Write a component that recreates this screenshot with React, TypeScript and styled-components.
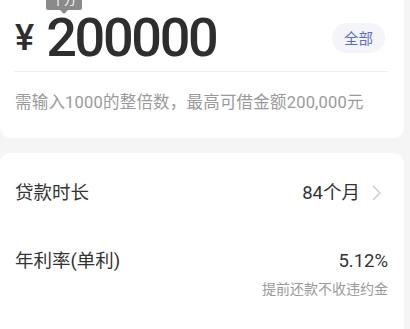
import { createGlobalStyle, styled } from 'styled-components';

const GlobalStyle = createGlobalStyle`
  html, body {
    margin: 0;
    padding: 0;
    background: #f5f5f5;
  }
  body {
    font-family: Roboto, 'Noto Sans CJK SC', sans-serif;
    color: #333;
    overflow: hidden;
  }
`;

const Page = styled.div`
  display: flex;
  flex-direction: column;
  gap: 15px;
  width: 404px;
  height: 329px;
`;

const Card = styled.section<{ $open?: boolean }>`
  background: #fff;
  border-radius: ${(p) => (p.$open ? '10px 10px 0 0' : '0 0 10px 10px')};
  padding: 0 16px 0 14px;
  flex: ${(p) => (p.$open ? '1' : 'none')};
`;

const AmountRow = styled.div`
  position: relative;
  display: flex;
  align-items: center;
  height: 67px;
  padding-top: 4px;
  border-bottom: 1px solid #eeeeee;
`;

const Tip = styled.div`
  position: absolute;
  left: 32px;
  top: -7px;
  width: 36px;
  height: 17px;
  background: #8a8a8a;
  border-radius: 2px;
  color: #fff;
  font-size: 12px;
  line-height: 17px;
  text-align: center;

  &::after {
    content: '';
    position: absolute;
    left: 14px;
    bottom: -4px;
    border-left: 4px solid transparent;
    border-right: 4px solid transparent;
    border-top: 4px solid #8a8a8a;
  }
`;

const Yen = styled.span`
  font-size: 36px;
  line-height: 36px;
  font-weight: 500;
  margin: 0 12px 0 1px;
  color: #2e2e2e;
`;

const Amount = styled.span`
  font-size: 54px;
  line-height: 54px;
  font-weight: 500;
  letter-spacing: -2.3px;
  color: #2e2e2e;
  flex: 1;
`;

const AllButton = styled.button`
  border: none;
  background: #f3f5f9;
  color: #5a6bd2;
  font-family: 'Noto Sans CJK SC', sans-serif;
  font-size: 14.5px;
  height: 30px;
  padding: 0 12px;
  border-radius: 15px;
  margin-right: 3px;
`;

const Hint = styled.p`
  margin: 0;
  padding: 21px 0 25px 1px;
  font-size: 16.5px;
  line-height: 20px;
  color: #9a9a9a;
  letter-spacing: 0.2px;
`;

const Row = styled.div<{ $top: number }>`
  display: flex;
  justify-content: space-between;
  align-items: flex-start;
  padding-top: ${(p) => p.$top}px;
`;

const Label = styled.span`
  font-size: 18.5px;
  line-height: 20px;
  color: #333;
  padding-left: 1px;
`;

const ValueBox = styled.div`
  display: flex;
  flex-direction: column;
  align-items: flex-end;
`;

const Value = styled.span`
  display: flex;
  align-items: center;
  font-size: 18.5px;
  line-height: 20px;
  color: #333;
`;

const Note = styled.span`
  margin-top: 9px;
  font-size: 14px;
  line-height: 18px;
  color: #999;
`;

const Chevron = styled.svg`
  width: 9px;
  height: 16px;
  margin: 0 7px 0 12px;
`;

export default function App() {
  return (
    <>
      <GlobalStyle />
      <Page>
        <Card>
          <AmountRow>
            <Tip>十万</Tip>
            <Yen>¥</Yen>
            <Amount>200000</Amount>
            <AllButton>全部</AllButton>
          </AmountRow>
          <Hint>需输入1000的整倍数，最高可借金额200,000元</Hint>
        </Card>
        <Card $open>
          <Row $top={30}>
            <Label>贷款时长</Label>
            <Value>
              84个月
              <Chevron viewBox='0 0 9 16' fill='none'>
                <path d='M1 1l7 7-7 7' stroke='#c8c8c8' strokeWidth='1.2' />
              </Chevron>
            </Value>
          </Row>
          <Row $top={48}>
            <Label>年利率(单利)</Label>
            <ValueBox>
              <Value>5.12%</Value>
              <Note>提前还款不收违约金</Note>
            </ValueBox>
          </Row>
        </Card>
      </Page>
    </>
  );
}
